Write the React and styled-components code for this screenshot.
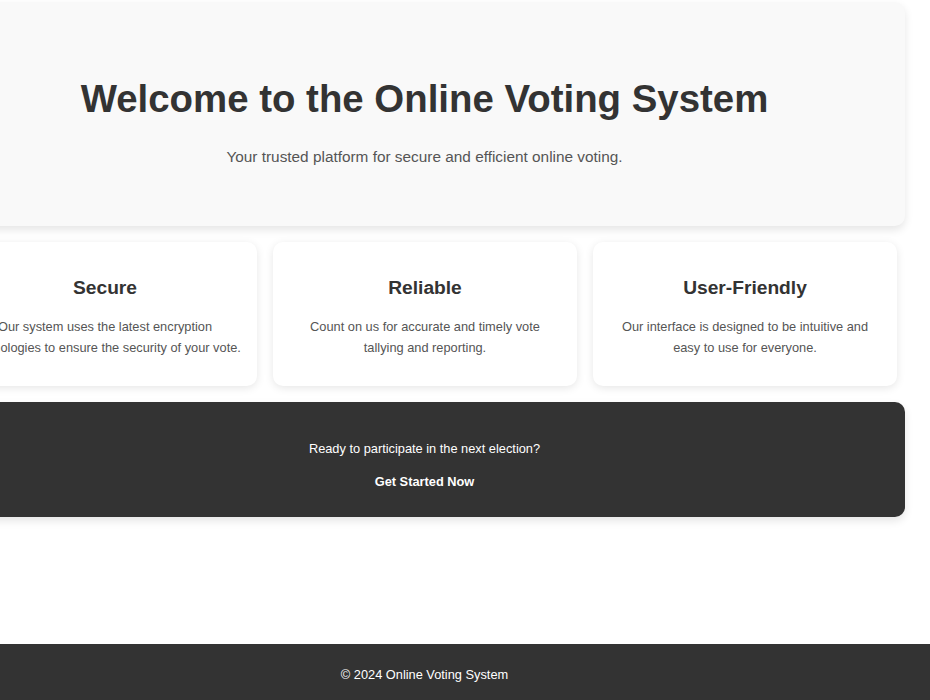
import React from 'react';
import styled, { createGlobalStyle } from 'styled-components';

const GlobalStyle = createGlobalStyle`
    html, body {
        margin: 0;
        padding: 0;
        background: #fff;
        font-family: "Liberation Sans", Arial, sans-serif;
        color: #333;
        overflow: hidden;
    }
`;

const Page = styled.div`
    min-height: 100vh;
    display: flex;
    flex-direction: column;
`;

const Main = styled.main`
    width: 961px;
    margin: 2px 0 0 -56px;
    display: flex;
    flex-direction: column;
    gap: 16px;
`;

const Hero = styled.section`
    background: #f9f9f9;
    border-radius: 10px;
    box-shadow: 0 4px 8px rgba(0, 0, 0, 0.1);
    padding: 60px 20px;
    text-align: center;

    h1 {
        margin: 14px 0 26px;
        font-size: 38.4px;
        font-weight: bold;
        line-height: 46px;
        color: #333;
    }

    p {
        margin: 0;
        font-size: 15.36px;
        line-height: 18px;
        color: #555;
    }
`;

const Features = styled.div`
    display: grid;
    grid-template-columns: repeat(3, 304px);
    gap: 16px;
    padding: 0 9px;
`;

const Card = styled.div`
    background: #fff;
    border-radius: 10px;
    box-shadow: 0 2px 8px rgba(0, 0, 0, 0.1);
    padding: 35px 16px 27px;
    text-align: center;

    h3 {
        margin: 0 0 18px;
        font-size: 19.2px;
        line-height: 22px;
        font-weight: bold;
        color: #333;
    }

    p {
        margin: 0;
        font-size: 12.8px;
        line-height: 20.8px;
        color: #555;
    }
`;

const Cta = styled.section`
    background: #333;
    border-radius: 10px;
    box-shadow: 0 4px 8px rgba(0, 0, 0, 0.1);
    padding: 39px 20px 18px;
    text-align: center;
    color: #fff;

    p {
        margin: 0 0 8px;
        font-size: 12.8px;
        line-height: 15px;
    }
`;

const CtaButton = styled.button`
    background: transparent;
    border: none;
    color: #fff;
    font-family: inherit;
    font-size: 12.8px;
    line-height: 15px;
    font-weight: bold;
    padding: 10px 20px;
    cursor: pointer;
`;

const Footer = styled.footer`
    margin-top: auto;
    height: 56px;
    box-sizing: border-box;
    padding: 23px 81px 0 0;
    background: #333;
    color: #fff;
    text-align: center;
    font-size: 12.8px;
    line-height: 15px;
`;

const features = [
    {
        title: 'Secure',
        text: 'Our system uses the latest encryption technologies to ensure the security of your vote.',
    },
    {
        title: 'Reliable',
        text: 'Count on us for accurate and timely vote tallying and reporting.',
    },
    {
        title: 'User-Friendly',
        text: 'Our interface is designed to be intuitive and easy to use for everyone.',
    },
];

const App = () => {
    return (
        <Page>
            <GlobalStyle />
            <Main>
                <Hero>
                    <h1>Welcome to the Online Voting System</h1>
                    <p>Your trusted platform for secure and efficient online voting.</p>
                </Hero>

                <Features>
                    {features.map(f => (
                        <Card key={f.title}>
                            <h3>{f.title}</h3>
                            <p>{f.text}</p>
                        </Card>
                    ))}
                </Features>

                <Cta>
                    <p>Ready to participate in the next election?</p>
                    <CtaButton>Get Started Now</CtaButton>
                </Cta>
            </Main>

            <Footer>© 2024 Online Voting System</Footer>
        </Page>
    );
};

export default App;
